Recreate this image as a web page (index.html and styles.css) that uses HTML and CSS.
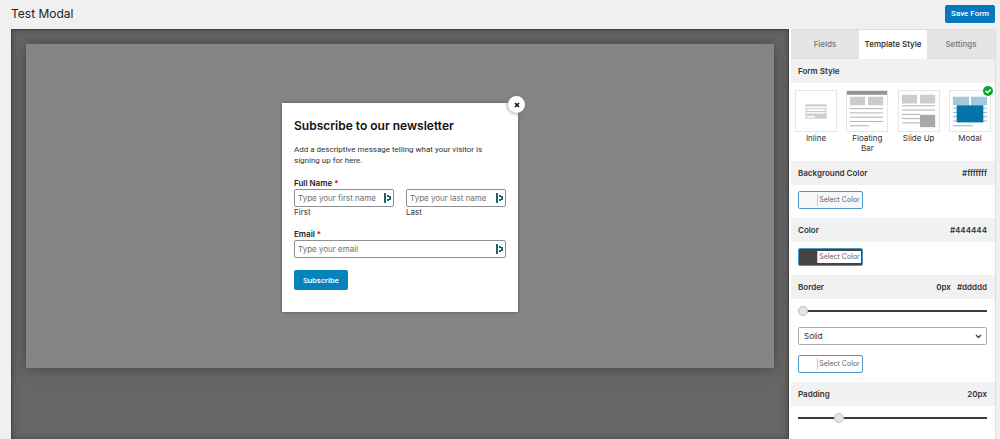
FILE: index.html
```html
<!DOCTYPE html>
<html lang="en">

<head>
    <meta charset="UTF-8">
    <meta name="viewport" content="width=device-width, initial-scale=1.0">
    <title>Test Modal</title>
    <link rel="stylesheet" href="styles.css">
</head>

<body>

    <svg class="sprite" width="0" height="0">
        <symbol id="autofill" viewBox="0 0 7 10">
            <path d="M0 0h2v10H0zM3 2h2v2H3zM3 6h2v2H3zM5 3h2v4H5z" />
        </symbol>
    </svg>

    <header class="topbar">
        <h1>Test Modal</h1>
        <button type="button" class="btn btn_save">Save Form</button>
    </header>

    <div class="editor">
        <main class="preview">
            <div class="overlay">
                <form class="modal">
                    <button type="button" class="close" aria-label="Close">
                        <svg width="6" height="6" viewBox="0 0 6 6"><path d="M1 1l4 4M5 1L1 5" stroke="#111" stroke-width="1.6" /></svg>
                    </button>
                    <h2>Subscribe to our newsletter</h2>
                    <p>Add a descriptive message telling what your visitor is signing up for here.</p>

                    <fieldset>
                        <legend>Full Name <span class="required">*</span></legend>
                        <div class="names">
                            <div>
                                <div class="field">
                                    <input type="text" id="first" placeholder="Type your first name">
                                    <svg class="autofill" width="7" height="10"><use href="#autofill" /></svg>
                                </div>
                                <label for="first">First</label>
                            </div>
                            <div>
                                <div class="field">
                                    <input type="text" id="last" placeholder="Type your last name">
                                    <svg class="autofill" width="7" height="10"><use href="#autofill" /></svg>
                                </div>
                                <label for="last">Last</label>
                            </div>
                        </div>
                    </fieldset>

                    <div class="email">
                        <label for="email" class="label">Email <span class="required">*</span></label>
                        <div class="field">
                            <input type="email" id="email" placeholder="Type your email">
                            <svg class="autofill" width="7" height="10"><use href="#autofill" /></svg>
                        </div>
                    </div>

                    <button type="button" class="btn">Subscribe</button>
                </form>
            </div>
        </main>

        <aside class="sidebar">
            <nav class="tabs">
                <button type="button">Fields</button>
                <button type="button" class="active">Template Style</button>
                <button type="button">Settings</button>
            </nav>

            <h3 class="head">Form Style</h3>
            <div class="styles">
                <button type="button" class="style">
                    <svg viewBox="0 0 42 42">
                        <rect x="10" y="14" width="22" height="15" fill="#ccc" />
                        <path d="M11 16h20v2H11zM11 19h20v2H11zM11 22h20v2H11zM11 26h9v2h-9z" fill="#f6f6f6" />
                    </svg>
                    <span>Inline</span>
                </button>
                <button type="button" class="style">
                    <svg viewBox="0 0 42 42">
                        <path d="M0 0h42v4H0z" fill="#939393" />
                        <path d="M3 6h16v9H3zM22 6h16v9H22z" fill="#ccc" />
                        <path d="M3 18.500h35M3 23h35M3 27.500h35M3 32h35M3 36.500h20" stroke="#b0b0b0" />
                    </svg>
                    <span>Floating Bar</span>
                </button>
                <button type="button" class="style">
                    <svg viewBox="0 0 42 42">
                        <path d="M3 4h16v9H3zM22 4h16v9H22z" fill="#ccc" />
                        <path d="M3 15.500h35M3 20h35M3 24.500h19M3 29h19M3 33.500h19" stroke="#b0b0b0" />
                        <path d="M22 25h16v13H22z" fill="#a8a8a8" />
                    </svg>
                    <span>Slide Up</span>
                </button>
                <button type="button" class="style">
                    <svg viewBox="0 0 42 42">
                        <path d="M3 6h17v9H3zM22 6h17v9H22z" fill="#a3cadb" />
                        <path d="M3 18h36M3 22.500h36M3 27h36M3 31.500h36M3 36.500h21" stroke="#7fb5cf" />
                        <path d="M7 15h28v18H7z" fill="#0673aa" />
                    </svg>
                    <span>Modal</span>
                    <svg class="check" viewBox="0 0 10 10"><circle cx="5" cy="5" r="5" fill="#0ba62c" /><path d="M2.500 4.800l2 2 3.200-3.300" fill="none" stroke="#fff" stroke-width="1.500" /></svg>
                </button>
            </div>

            <h3 class="head">Background Color <span>#fffffff</span></h3>
            <div class="content">
                <button type="button" class="color color_light"><span>Select Color</span></button>
            </div>

            <h3 class="head">Color <span>#444444</span></h3>
            <div class="content">
                <button type="button" class="color color_dark"><span>Select Color</span></button>
            </div>

            <h3 class="head">Border <span>0px</span> <span class="value">#ddddd</span></h3>
            <div class="content">
                <input type="range" aria-label="Border width" min="0" max="95" value="0">
                <div class="select">
                    <select aria-label="Border style">
                        <option>Solid</option>
                        <option>Dashed</option>
                        <option>Dotted</option>
                    </select>
                    <svg width="7" height="5" viewBox="0 0 7 5"><path d="M1 1l2.500 2.500L6 1" fill="none" stroke="#444" stroke-width="1.400" /></svg>
                </div>
                <button type="button" class="color"><span>Select Color</span></button>
            </div>

            <h3 class="head">Padding <span>20px</span></h3>
            <div class="content">
                <input type="range" aria-label="Padding" min="0" max="100" value="20">
            </div>
        </aside>
    </div>

</body>

</html>
```
FILE: styles.css
```css
* {
    box-sizing: border-box;
}

body {
    display: flex;
    flex-direction: column;
    height: 100vh;
    margin: 0;
    overflow: hidden;
    background-color: #f0f0f1;
    color: #333;
    font: 8px/11px Inter, "Liberation Sans", sans-serif;
}

h1,
h2,
h3,
p,
fieldset {
    margin: 0;
}

button,
input,
select {
    margin: 0;
    color: inherit;
    font: inherit;
}

button {
    cursor: pointer;
}

.sprite {
    position: absolute;
}

.topbar {
    display: flex;
    align-items: center;
    justify-content: space-between;
    flex: none;
    height: 29px;
    padding: 0 5px 2px 11px;
}

.topbar h1 {
    color: #222;
    font-size: 12px;
    font-weight: 400;
    line-height: 16px;
}

.btn {
    height: 20px;
    padding: 0 9px;
    border: 0;
    border-radius: 2px;
    background-color: #0683bd;
    color: #fff;
    font-family: Roboto, sans-serif;
    font-weight: 500;
}

.btn_save {
    height: 18px;
    padding: 0 6px;
    background-color: #0878be;
}

.editor {
    display: flex;
    flex: 1;
    min-height: 0;
    padding-right: 4px;
    padding-left: 11px;
}

/* preview */
.preview {
    flex: 1;
    padding: 14px;
    border: 1px solid #444;
    border-bottom: 0;
    background-color: #666;
    box-shadow: inset 0 0 6px #444;
}

.overlay {
    display: flex;
    align-items: center;
    justify-content: center;
    padding: 59px 0 56px;
    background-color: #858585;
    box-shadow: 0 0 12px #444;
}

.modal {
    position: relative;
    width: 236px;
    padding: 15px 12px 22px;
    background-color: #fff;
    box-shadow: 0 0 3px #555;
}

.modal h2 {
    margin-bottom: 10px;
    color: #111;
    font-size: 12px;
    font-weight: 600;
    line-height: 16px;
}

.modal p {
    font-family: Roboto, sans-serif;
}

.close {
    position: absolute;
    top: -7px;
    right: -7px;
    display: flex;
    align-items: center;
    justify-content: center;
    width: 17px;
    height: 17px;
    padding: 0;
    border: 0;
    border-radius: 50%;
    background-color: #fff;
    box-shadow: 0 0 4px #777;
}

fieldset {
    margin-top: 12px;
    padding: 0;
    border: 0;
}

legend,
.label {
    display: block;
    padding: 0;
    color: #222;
    font-weight: 600;
}

.required {
    color: #e00;
}

.names {
    display: grid;
    grid-template-columns: 1fr 1fr;
    gap: 12px;
}

.field {
    position: relative;
}

.field input {
    display: block;
    width: 100%;
    height: 18px;
    padding: 0 3px;
    border: 1px solid #8c9094;
    border-radius: 2px;
    background-color: #fff;
}

.field input::placeholder {
    color: #707070;
    opacity: 1;
}

.autofill {
    position: absolute;
    top: 4px;
    right: 3px;
    fill: #1c6670;
}

.names label {
    display: block;
}

.email {
    margin: 11px 0 12px;
}

/* sidebar */
.sidebar {
    flex: none;
    width: 207px;
    padding-left: 2px;
    border-right: 1px solid #ddd;
    background-color: #fff;
}

.tabs {
    display: flex;
    height: 30px;
    border-top: 1px solid #ddd;
}

.tabs button {
    flex: 1;
    padding: 0;
    border: 0;
    border-bottom: 1px solid #ddd;
    background-color: #e5e5e5;
    color: #777;
    font-weight: 500;
}

.tabs .active {
    border-bottom-color: #fff;
    background-color: #fff;
    color: #222;
}

.head {
    display: flex;
    height: 24px;
    padding: 0 8px 0 7px;
    background-color: #f1f1f1;
    font-size: 8px;
    font-weight: 600;
    line-height: 24px;
}

.head span {
    margin-left: auto;
}

.head .value {
    margin-left: 6px;
}

.styles {
    display: grid;
    grid-template-columns: repeat(4, 42px);
    justify-content: space-between;
    height: 78px;
    padding: 7px 4px 0;
}

.style {
    position: relative;
    display: flex;
    flex-direction: column;
    align-items: center;
    padding: 0;
    border: 0;
    background: none;
    line-height: 10px;
}

.style > svg {
    flex: none;
    width: 42px;
    height: 42px;
    margin-bottom: 1px;
    border: 1px solid #e5e5e5;
}

.style > .check {
    position: absolute;
    top: -4px;
    right: -2px;
    width: 10px;
    height: 10px;
    border: 0;
}

.content {
    display: flex;
    flex-direction: column;
    gap: 10px;
    padding: 6px 8px 9px 7px;
}

.color {
    align-self: flex-start;
    width: 65px;
    height: 18px;
    padding: 0 1px 0 18px;
    border: 1px solid #4b96c7;
    border-radius: 2px;
    background-color: #fff;
    color: #666;
    font-size: 7px;
}

.color span {
    display: block;
    border-left: 1px solid #ccc;
    background-color: #fff;
    line-height: 12px;
}

.color_light {
    background-color: #f6f7f8;
}

.color_light span {
    background-color: #f6f7f8;
}

.color_dark {
    background-color: #444;
}

input[type="range"] {
    width: 100%;
    height: 12px;
    appearance: none;
    background: none;
}

input[type="range"]::-webkit-slider-runnable-track {
    height: 2px;
    background-color: #3c3c3c;
}

input[type="range"]::-webkit-slider-thumb {
    width: 10px;
    height: 10px;
    margin-top: -4px;
    appearance: none;
    border: 1px solid #bbb;
    border-radius: 50%;
    background-color: #e5e5e5;
}

.select {
    display: flex;
    align-items: center;
    position: relative;
}

.select select {
    width: 100%;
    height: 18px;
    padding: 0 5px;
    appearance: none;
    border: 1px solid #aaa;
    border-radius: 2px;
    background-color: #fff;
}

.select svg {
    position: absolute;
    right: 5px;
}
```
